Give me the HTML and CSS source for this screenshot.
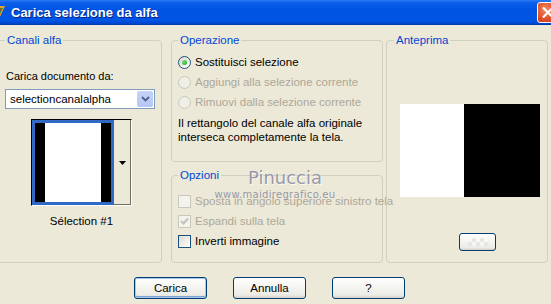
FILE: index.html
```html
<!DOCTYPE html>
<html lang="it">
<head>
    <meta charset="UTF-8">
    <meta name="viewport" content="width=device-width, initial-scale=1.0">
    <title>Carica selezione da alfa</title>
    <link rel="stylesheet" href="styles.css">
</head>
<body>
    <div class="window">
        <div class="titlebar">
            <svg class="app-icon" width="14" height="16" viewBox="0 0 14 16">
                <path d="M1 2 L13 2 L7 15 Z" fill="#e8a030"/>
                <path d="M3 4 L11 4 L7 12 Z" fill="#3a8a3a"/>
                <path d="M5 5 L9 5 L7 9 Z" fill="#d83020"/>
            </svg>
            <span class="title">Carica selezione da alfa</span>
            <span class="spacer"></span>
            <button class="close-btn" aria-label="Chiudi">
                <svg width="21" height="21" viewBox="0 0 21 21">
                    <path d="M6 6 L15 15 M15 6 L6 15" stroke="#fff" stroke-width="2.2" stroke-linecap="square"/>
                </svg>
            </button>
        </div>

        <div class="content">
            <div class="panels">
                <fieldset class="group group-canali">
                    <legend>Canali alfa</legend>
                    <div class="field-label">Carica documento da:</div>
                    <div class="select">
                        <span class="select-value">selectioncanalalpha</span>
                        <span class="select-arrow">
                            <svg width="9" height="6" viewBox="0 0 9 6">
                                <path d="M1 1 L4.5 4.5 L8 1" stroke="#4d6185" stroke-width="1.8" fill="none"/>
                            </svg>
                        </span>
                    </div>
                    <div class="thumb-picker">
                        <div class="thumb">
                            <div class="thumb-img">
                                <span class="bar"></span>
                                <span class="fill"></span>
                                <span class="bar"></span>
                            </div>
                        </div>
                        <div class="thumb-drop">
                            <svg width="7" height="4" viewBox="0 0 7 4"><path d="M0 0 H7 L3.5 4 Z" fill="#000"/></svg>
                        </div>
                    </div>
                    <div class="thumb-caption">Sélection #1</div>
                </fieldset>

                <div class="middle-col">
                    <fieldset class="group group-operazione">
                        <legend>Operazione</legend>
                        <label class="option">
                            <span class="radio checked"></span>
                            <span>Sostituisci selezione</span>
                        </label>
                        <label class="option disabled">
                            <span class="radio"></span>
                            <span>Aggiungi alla selezione corrente</span>
                        </label>
                        <label class="option disabled">
                            <span class="radio"></span>
                            <span>Rimuovi dalla selezione corrente</span>
                        </label>
                        <p class="note">Il rettangolo del canale alfa originale<br>interseca completamente la tela.</p>
                    </fieldset>

                    <fieldset class="group group-opzioni">
                        <legend>Opzioni</legend>
                        <label class="option disabled">
                            <span class="check"></span>
                            <span>Sposta in angolo superiore sinistro tela</span>
                        </label>
                        <label class="option disabled">
                            <span class="check checked">
                                <svg width="9" height="9" viewBox="0 0 9 9"><path d="M1 4 L3.5 6.5 L8 1.5" stroke="#c4c2b4" stroke-width="2" fill="none"/></svg>
                            </span>
                            <span>Espandi sulla tela</span>
                        </label>
                        <label class="option">
                            <span class="check"></span>
                            <span>Inverti immagine</span>
                        </label>
                    </fieldset>
                </div>

                <fieldset class="group group-anteprima">
                    <legend>Anteprima</legend>
                    <div class="preview">
                        <span class="preview-white"></span>
                        <span class="preview-black"></span>
                    </div>
                    <button class="btn btn-small"><span class="checker"></span></button>
                </fieldset>
            </div>

            <div class="actions">
                <button class="btn btn-default">Carica</button>
                <button class="btn">Annulla</button>
                <button class="btn">?</button>
            </div>
        </div>

        <div class="watermark">
            <div class="wm-name">Pinuccia</div>
            <div class="wm-url">www.maidiregrafico.eu</div>
        </div>
    </div>
</body>
</html>
```

FILE: styles.css
```css
body {
    margin: 0;
    background: #ece9d8;
    font-family: 'Liberation Sans', Arial, sans-serif;
    font-size: 11px;
    color: #000;
    overflow: hidden;
}
.window {
    position: relative;
    width: 551px;
    height: 304px;
    background: #ece9d8;
}

/* barra del titolo */
.titlebar {
    height: 25px;
    display: flex;
    align-items: center;
    background: linear-gradient(#2b7bf6 0%, #0a5ee9 12%, #0054e3 40%, #0055e5 85%, #0042c8 100%);
    border-bottom: 1px solid #003bb0;
    box-sizing: border-box;
}
.app-icon {
    margin-left: -8px;
    margin-right: 5px;
    flex: none;
}
.title {
    color: #fff;
    font-family: 'Liberation Sans', Arial, sans-serif;
    font-weight: bold;
    font-size: 13px;
    text-shadow: 1px 1px 0 #0a1f80;
}
.spacer {
    flex: 1;
}
.close-btn {
    width: 22px;
    height: 21px;
    margin-right: -8px;
    padding: 0;
    border: 1px solid #fff;
    border-radius: 3px;
    background: radial-gradient(circle at 40% 35%, #f08a6a, #e0502a 55%, #c03410);
    display: flex;
    align-items: center;
    justify-content: center;
}

/* contenuto */
.content {
    padding-top: 8px;
}
.panels {
    display: flex;
    height: 230px;
}
.group {
    margin: 0;
    border: 1px solid #d0d0bf;
    border-radius: 4px;
    box-sizing: border-box;
    min-width: 0;
}
.group legend {
    color: #0046d5;
    font-size: 11.5px;
    line-height: 14px;
    padding: 0 2px;
}
.group-canali {
    width: 167px;
    margin-left: -5px;
    padding: 0 0 0 9px;
}
.middle-col {
    margin-left: 9px;
    width: 212px;
    display: flex;
    flex-direction: column;
    gap: 6px;
}
.group-operazione {
    height: 129px;
    padding: 0 0 0 6px;
}
.group-opzioni {
    flex: 1;
    padding: 0 0 0 6px;
}
.group-anteprima {
    width: 162px;
    margin-left: 3px;
    padding: 0 0 0 7px;
}

/* canali alfa */
.field-label {
    margin-top: 22px;
    line-height: 14px;
    margin-left: 1px;
}
.select {
    margin-top: 6px;
    width: 150px;
    height: 20px;
    box-sizing: border-box;
    border: 1px solid #7f9db9;
    background: #fff;
    display: flex;
    align-items: center;
    padding: 1px;
}
.select-value {
    flex: 1;
    padding-left: 3px;
    font-size: 11.5px;
}
.select-arrow {
    width: 16px;
    height: 16px;
    background: linear-gradient(#c6d3f7, #b4c6f4);
    border-radius: 2px;
    display: flex;
    align-items: center;
    justify-content: center;
}
.thumb-picker {
    margin: 10px 0 0 26px;
    width: 101px;
    height: 87px;
    box-sizing: border-box;
    border: 1px solid #000;
    border-right-color: #fff;
    border-bottom-color: #fff;
    display: flex;
}
.thumb {
    width: 82px;
    box-sizing: border-box;
    border: 3px solid #316ac5;
    background: #fff;
}
.thumb-img {
    display: flex;
    height: 100%;
}
.thumb-img .bar {
    width: 10px;
    background: #000;
}
.thumb-img .fill {
    flex: 1;
    background: #fff;
}
.thumb-drop {
    flex: 1;
    background: #ece9d8;
    border-bottom: 1px solid #716f64;
    border-right: 1px solid #716f64;
    display: flex;
    align-items: center;
    justify-content: center;
    padding-top: 1px;
}
.thumb-caption {
    margin-top: 8px;
    width: 107px;
    margin-left: 23px;
    text-align: center;
    font-size: 11.5px;
    line-height: 14px;
}

/* opzioni */
.option {
    display: flex;
    align-items: center;
    height: 20px;
    gap: 4px;
    font-size: 11.5px;
    white-space: nowrap;
}
.group-operazione .option:first-of-type {
    margin-top: 5px;
}
.group-opzioni .option:first-of-type {
    margin-top: 9px;
}
.option.disabled {
    color: #aca899;
}
.radio {
    width: 13px;
    height: 13px;
    box-sizing: border-box;
    border: 1px solid #1c5180;
    border-radius: 50%;
    background: linear-gradient(135deg, #dcd9cd, #fff);
    display: flex;
    align-items: center;
    justify-content: center;
    flex: none;
}
.radio.checked::after {
    content: "";
    width: 5px;
    height: 5px;
    border-radius: 50%;
    background: radial-gradient(circle at 35% 35%, #6ee06e, #21a121);
}
.option.disabled .radio {
    border-color: #cac8bb;
    background: #f0efe6;
}
.check {
    width: 13px;
    height: 13px;
    box-sizing: border-box;
    border: 1px solid #1c5180;
    background: linear-gradient(135deg, #dcdbd0, #fff);
    display: flex;
    align-items: center;
    justify-content: center;
    flex: none;
}
.option.disabled .check {
    border-color: #cac8bb;
    background: #f4f3ee;
}
.note {
    margin: 4px 0 0;
    line-height: 14px;
    font-size: 11.5px;
}

/* anteprima */
.preview {
    margin-top: 57px;
    margin-left: 6px;
    width: 140px;
    height: 93px;
    display: flex;
}
.preview-white {
    width: 64px;
    background: #fff;
}
.preview-black {
    flex: 1;
    background: #000;
}
.btn {
    font-family: 'Liberation Sans', Arial, sans-serif;
    font-size: 11.5px;
    color: #000;
    border: 1px solid #003c74;
    border-radius: 3px;
    background: linear-gradient(#fff 0%, #f6f6f2 40%, #ecebe6 85%, #d6d0c5 100%);
    padding: 0;
}
.btn-small {
    display: block;
    margin: 36px 0 0 65px;
    width: 37px;
    height: 18px;
}
.checker {
    display: block;
    width: 20px;
    height: 8px;
    margin: 0 auto;
    background: conic-gradient(#e4e4e4 25%, #f8f8f8 0 50%, #e4e4e4 0 75%, #f8f8f8 0);
    background-size: 8px 8px;
    opacity: 0.8;
}

/* pulsanti */
.actions {
    display: flex;
    margin-top: 14px;
    padding-left: 134px;
    gap: 26px;
}
.actions .btn {
    width: 73px;
    height: 22px;
}
.btn-default {
    box-shadow: inset 0 0 0 1px #a8c8f0, inset 0 -1px 0 1px #7da2ce;
}

/* filigrana */
.watermark {
    position: absolute;
    left: 213px;
    top: 167px;
    width: 124px;
    text-align: center;
    pointer-events: none;
    color: rgba(120, 124, 150, 0.75);
}
.wm-name {
    font-family: 'DejaVu Sans', Verdana, sans-serif;
    font-size: 18px;
    line-height: 22px;
    padding-left: 20px;
    text-shadow: 1px 1px 0 rgba(255, 255, 255, 0.8);
}
.wm-url {
    font-family: 'DejaVu Sans', Verdana, sans-serif;
    font-size: 10px;
    line-height: 12px;
    letter-spacing: 0.3px;
}
```
